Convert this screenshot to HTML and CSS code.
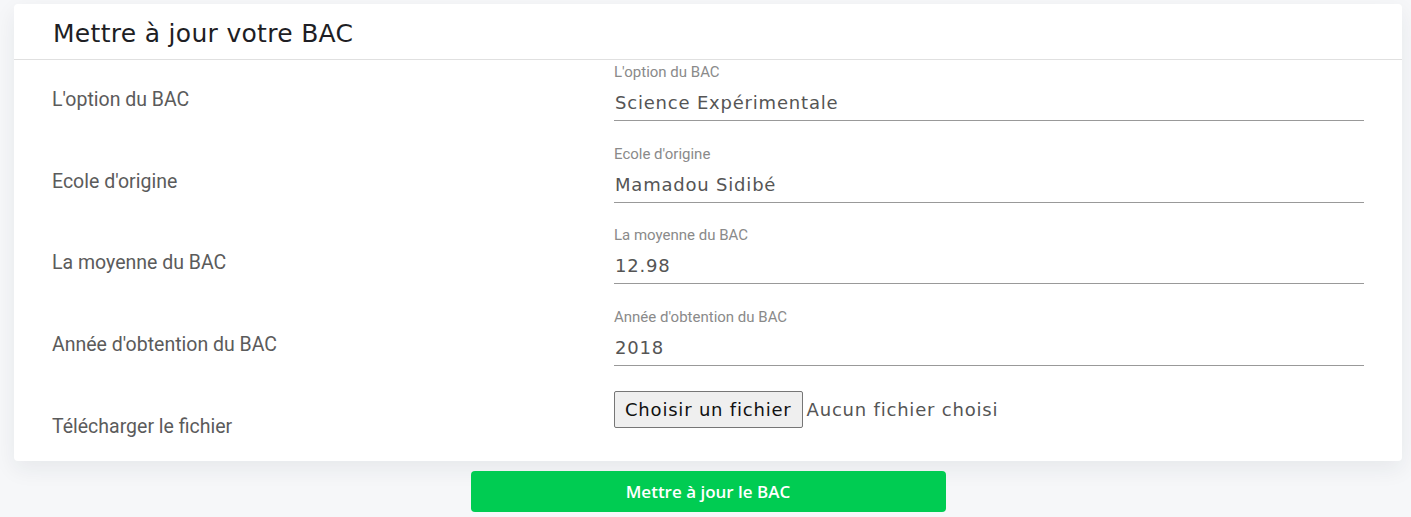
FILE: index.html
```html
<!DOCTYPE html>
<html lang="fr">
<head>
<meta charset="utf-8">
<title>Mettre à jour votre BAC</title>
<link rel="stylesheet" href="styles.css">
</head>
<body>
<div class="page">
  <div class="card">
    <div class="card-header">
      <h1 class="title">Mettre à jour votre BAC</h1>
    </div>
    <div class="card-body">
      <div class="row">
        <div class="row-label">L'option du BAC</div>
        <div class="field">
          <label class="field-label">L'option du BAC</label>
          <div class="field-input">Science Expérimentale</div>
        </div>
      </div>
      <div class="row row-short">
        <div class="row-label">Ecole d'origine</div>
        <div class="field">
          <label class="field-label">Ecole d'origine</label>
          <div class="field-input">Mamadou Sidibé</div>
        </div>
      </div>
      <div class="row">
        <div class="row-label">La moyenne du BAC</div>
        <div class="field">
          <label class="field-label">La moyenne du BAC</label>
          <div class="field-input">12.98</div>
        </div>
      </div>
      <div class="row">
        <div class="row-label">Année d'obtention du BAC</div>
        <div class="field">
          <label class="field-label">Année d'obtention du BAC</label>
          <div class="field-input">2018</div>
        </div>
      </div>
      <div class="row row-last">
        <div class="row-label">Télécharger le fichier</div>
        <div class="file-field">
          <span class="file-btn">Choisir un fichier</span>
          <span class="file-name">Aucun fichier choisi</span>
        </div>
      </div>
    </div>
  </div>
  <div class="actions">
    <button class="submit" type="button">Mettre à jour le BAC</button>
  </div>
</div>
</body>
</html>
```
FILE: styles.css
```css
html, body {
  margin: 0;
  padding: 0;
  background: #f6f7f9;
}
body {
  font-family: Roboto, "Liberation Sans", sans-serif;
}
.page {
  padding: 4px 9px 0 14px;
}
.card {
  background: #fff;
  border-radius: 4px;
  box-shadow: 0 8px 22px rgba(30, 40, 60, 0.07);
}
.card-header {
  box-sizing: border-box;
  height: 56px;
  padding: 3px 38px 0 39px;
  border-bottom: 1px solid #e0e0e0;
  display: flex;
  align-items: center;
}
.title {
  margin: 0;
  font-family: "DejaVu Sans", sans-serif;
  font-weight: 400;
  font-size: 25px;
  color: #1e1e24;
  letter-spacing: 0.3px;
}
.card-body {
  padding: 0 38px;
}
.row {
  display: grid;
  grid-template-columns: 562px 1fr;
  height: 82px;
}
.row-short {
  height: 81px;
}
.row-last {
  height: 74px;
}
.row-label {
  padding-top: 29px;
  font-size: 19.5px;
  line-height: 22px;
  color: #5b5b5b;
}
.field {
  padding-top: 4px;
}
.field-label {
  display: block;
  font-size: 15px;
  line-height: 17px;
  color: #8a8a8a;
}
.field-input {
  margin-top: 3px;
  height: 36px;
  border-bottom: 1px solid #999;
  display: flex;
  align-items: center;
  padding-left: 1px;
  font-family: "DejaVu Sans", sans-serif;
  font-size: 18px;
  color: #555;
  letter-spacing: 0.8px;
}
.file-field {
  padding-top: 4px;
  display: flex;
  align-items: center;
  height: 37px;
}
.file-btn {
  box-sizing: border-box;
  height: 37px;
  padding: 0 10px;
  display: flex;
  align-items: center;
  background: #efefef;
  border: 1px solid #767676;
  border-radius: 2px;
  font-family: "DejaVu Sans", sans-serif;
  font-size: 18px;
  color: #111;
  letter-spacing: 0.8px;
}
.file-name {
  margin-left: 4px;
  font-family: "DejaVu Sans", sans-serif;
  font-size: 18px;
  color: #555;
  letter-spacing: 0.8px;
}
.actions {
  display: flex;
  justify-content: center;
  padding-top: 10px;
}
.submit {
  width: 475px;
  height: 41px;
  border: 0;
  border-radius: 4px;
  background: #00cc52;
  color: #fff;
  font-family: "Open Sans", sans-serif;
  font-weight: 600;
  font-size: 17px;
  cursor: pointer;
}
```
